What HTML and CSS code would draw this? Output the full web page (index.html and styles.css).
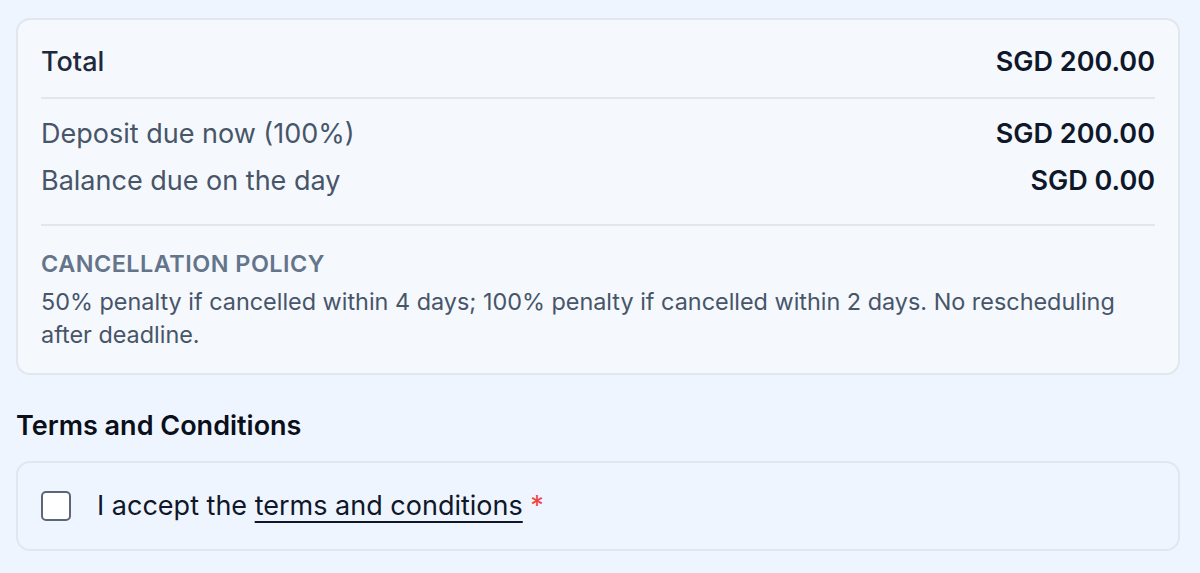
FILE: index.html
```html
<!DOCTYPE html>
<html lang="en">
<head>
    <meta charset="UTF-8">
    <meta name="viewport" content="width=device-width, initial-scale=1.0">
    <title>Booking summary</title>
    <link rel="stylesheet" href="styles.css">
</head>
<body>
    <!-- payment summary -->
    <section class="summary">
        <div class="row row-total">
            <span>Total</span>
            <span class="amount">SGD 200.00</span>
        </div>
        <hr class="divider">
        <div class="row">
            <span>Deposit due now (100%)</span>
            <span class="amount">SGD 200.00</span>
        </div>
        <div class="row">
            <span>Balance due on the day</span>
            <span class="amount">SGD 0.00</span>
        </div>
        <hr class="divider divider-policy">
        <div class="policy">
            <h3>Cancellation policy</h3>
            <p>50% penalty if cancelled within 4 days; 100% penalty if cancelled within 2 days. No rescheduling after deadline.</p>
        </div>
    </section>

    <h2 class="terms-title">Terms and Conditions</h2>
    <div class="terms">
        <label class="check">
            <input type="checkbox" id="accept">
            <span class="box"></span>
            <span>I accept the <a href="#">terms and conditions</a> <span class="req">*</span></span>
        </label>
    </div>
</body>
</html>
```

FILE: styles.css
```css
body { font-family: Inter, "Noto Sans", sans-serif; margin: 0; padding: 18px 20px 0 16px; background-color: #eff5fe; color: #0f172a; }
.summary { background-color: #f5f8fd; border: 2px solid #e1e7ef; border-radius: 14px; padding: 24px 23px 22px; }
.row { display: flex; justify-content: space-between; align-items: center; font-size: 27px; line-height: 36px; color: #475569; }
.row + .row { margin-top: 11px; }
.row-total { color: #1e293b; font-weight: 500; }
.amount { color: #0f172a; font-weight: 600; }
.divider { border: none; border-top: 2px solid #e1e7ef; margin: 17px 0; }
.divider-policy { margin: 25px 0 22px; }
.policy h3 { margin: 0 0 5px; font-size: 23.4px; line-height: 32px; font-weight: 600; text-transform: uppercase; letter-spacing: 0.5px; color: #64748b; }
.policy p { margin: 0; font-size: 23.4px; line-height: 33px; color: #475569; }
.terms-title { margin: 33px 0 17px; font-size: 27px; line-height: 36px; font-weight: 600; color: #0a0f1a; }
.terms { border: 2px solid #e1e7ef; border-radius: 14px; padding: 25px 23px; }
.check { display: flex; align-items: center; gap: 26px; font-size: 27px; line-height: 36px; color: #0f172a; cursor: pointer; }
.check input { display: none; }
.box { width: 30px; height: 30px; box-sizing: border-box; border: 2px solid #5b6679; border-radius: 5px; background: #fff; }
.check a { color: #0f172a; text-decoration: underline; text-underline-offset: 6px; text-decoration-thickness: 2px; }
.req { color: #ef4444; }
```
